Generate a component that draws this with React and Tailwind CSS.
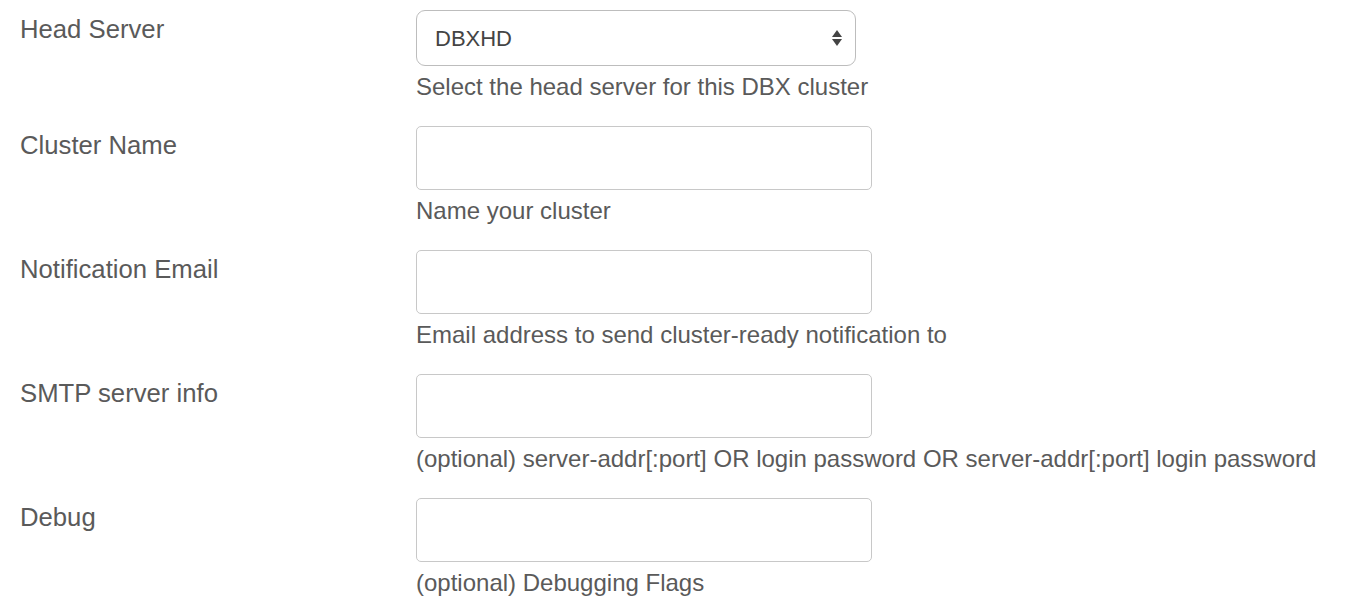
const fields = [
  { label: 'Cluster Name', help: 'Name your cluster' },
  { label: 'Notification Email', help: 'Email address to send cluster-ready notification to' },
  { label: 'SMTP server info', help: '(optional) server-addr[:port] OR login password OR server-addr[:port] login password' },
  { label: 'Debug', help: '(optional) Debugging Flags' },
];

function Row({ label, help, children }) {
  return (
    <div className="flex">
      <div className="w-[396px] shrink-0 pt-[4px] text-[25.7px] leading-[30px]">{label}</div>
      <div className="flex flex-col">
        {children}
        <div className="mt-[6px] mb-[24px] text-[24px] leading-[30px] whitespace-nowrap">{help}</div>
      </div>
    </div>
  );
}

export default function App() {
  return (
    <div
      className="min-h-screen bg-white pl-[20px] pt-[10px] text-[#5a5a5a]"
      style={{ fontFamily: '"Liberation Sans", Arial, sans-serif' }}
    >
      <Row label="Head Server" help="Select the head server for this DBX cluster">
        <div className="flex h-[56px] w-[440px] items-center justify-between rounded-[9px] border border-[#bdbdbd] bg-white pl-[18px] pr-[12px] text-[22px] text-[#444]">
          <span>DBXHD</span>
          <svg width="12" height="18" viewBox="0 0 12 18">
            <path d="M6 1 L11 8 L1 8 Z" fill="#444" />
            <path d="M6 17 L11 10 L1 10 Z" fill="#444" />
          </svg>
        </div>
      </Row>
      {fields.map((f) => (
        <Row key={f.label} label={f.label} help={f.help}>
          <input className="h-[64px] w-[456px] rounded-[5px] border border-[#c8c8c8] bg-white px-3 outline-none" />
        </Row>
      ))}
    </div>
  );
}
